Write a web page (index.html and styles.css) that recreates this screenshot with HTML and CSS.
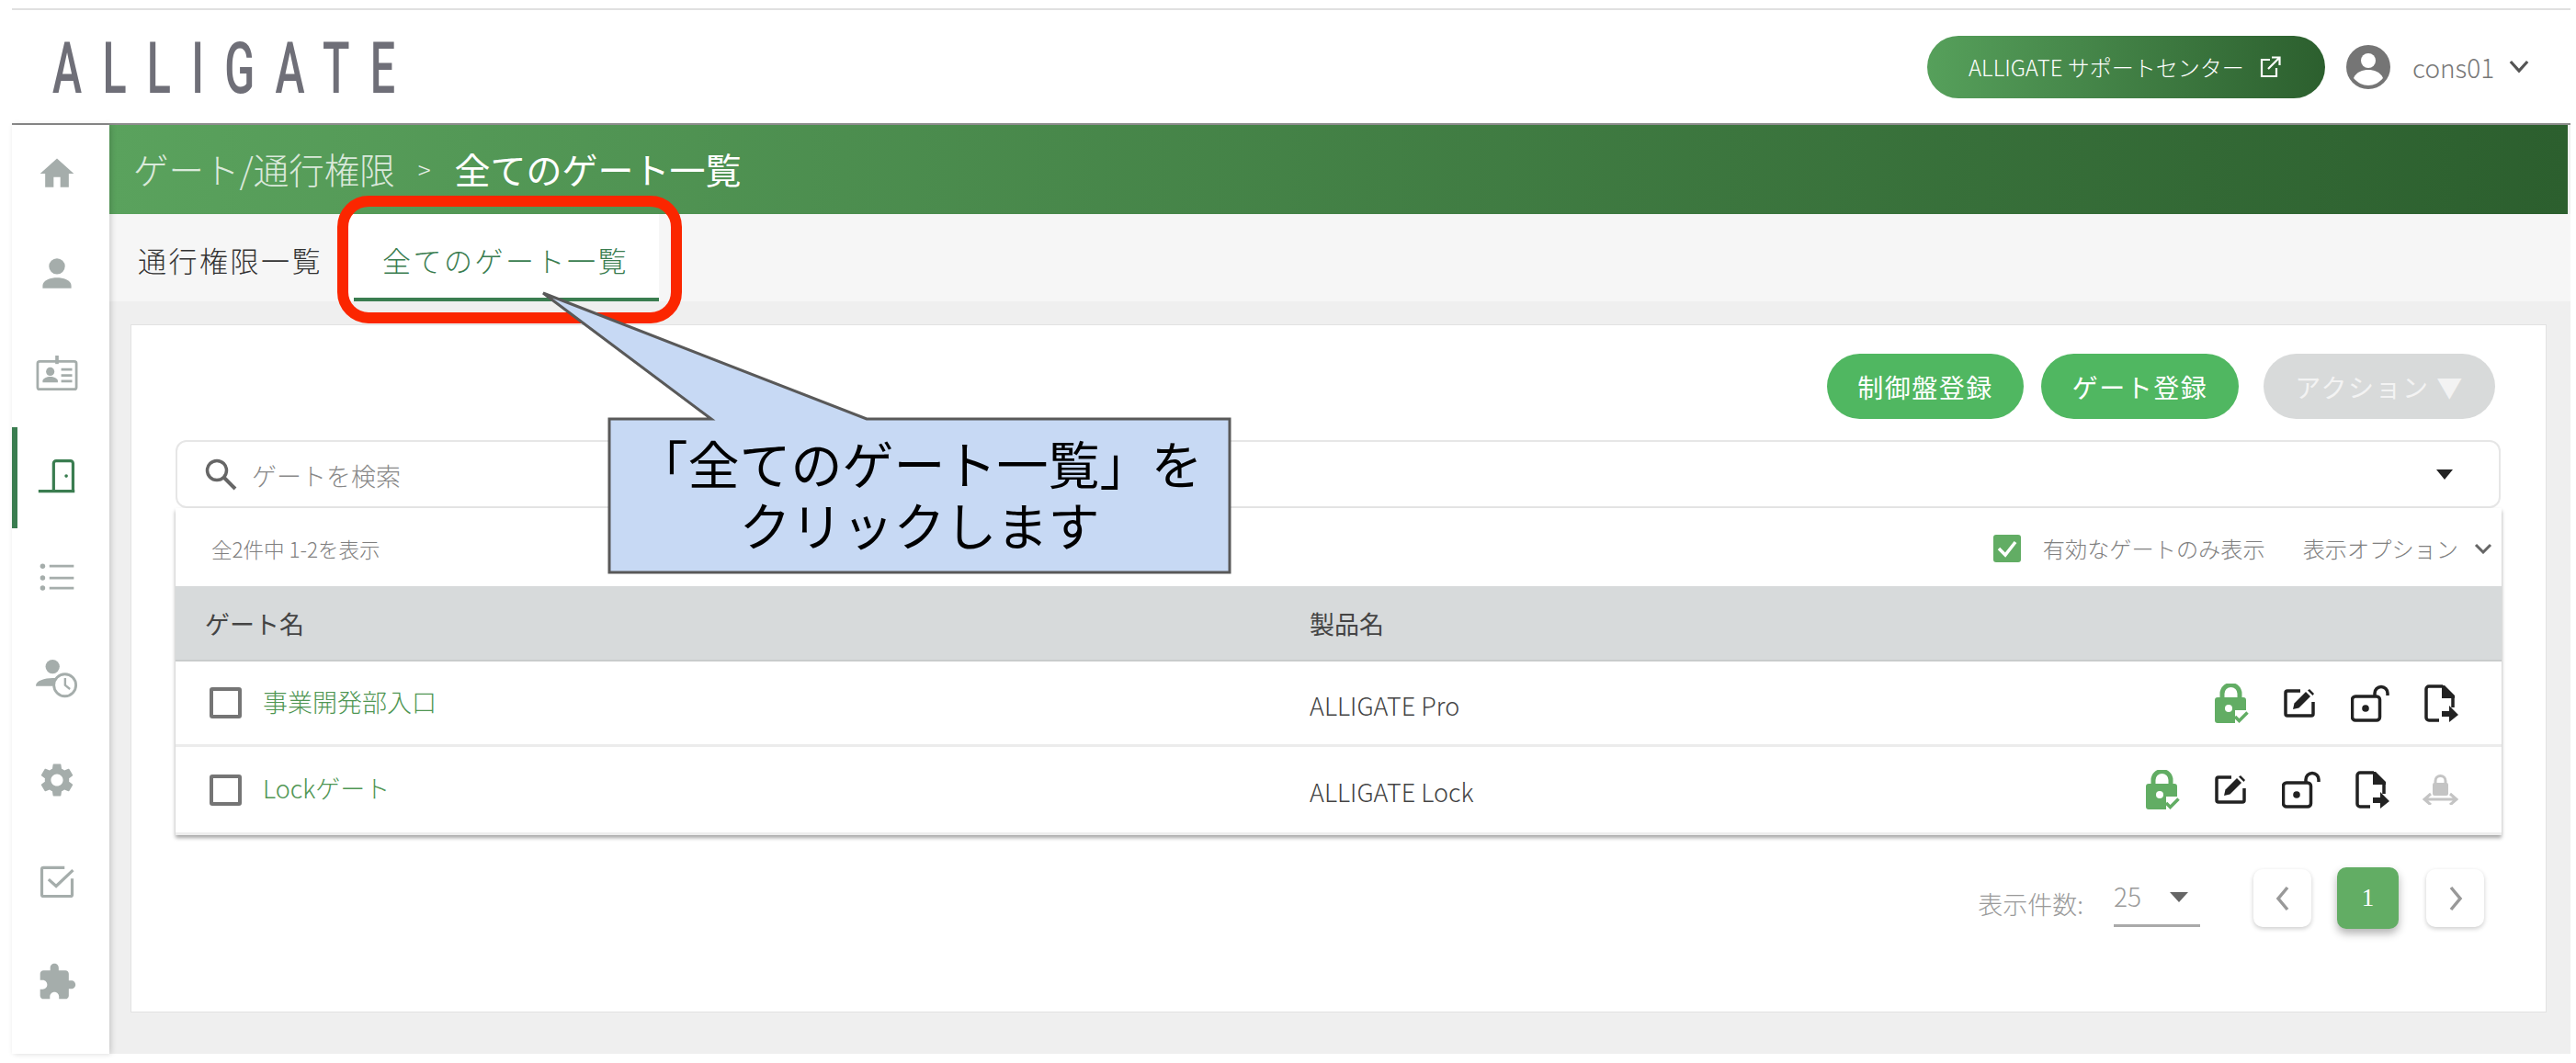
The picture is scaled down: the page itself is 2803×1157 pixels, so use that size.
FILE: index.html
```html
<!DOCTYPE html>
<html lang="ja">
<head>
<meta charset="utf-8">
<title>全てのゲート一覧</title>
<link rel="stylesheet" href="styles.css">
</head>
<body>
<svg class="defs" aria-hidden="true">
  <symbol id="i-lock" viewBox="0 0 38 43">
    <path d="M8 18V11a9.500 9.500 0 0 1 19 0v7" fill="none" stroke="#62ad64" stroke-width="5"/>
    <path d="M3 15h28a3 3 0 0 1 3 3v11h-12v14H3a3 3 0 0 1-3-3V18a3 3 0 0 1 3-3z" fill="#62ad64"/>
    <circle cx="15" cy="27" r="4" fill="#fff"/>
    <path d="M22 36l4.500 4.500 9-9" fill="none" stroke="#62ad64" stroke-width="3.500"/>
  </symbol>
  <symbol id="i-edit" viewBox="0 0 36 33">
    <path d="M19 3H5a2 2 0 0 0-2 2v23a2 2 0 0 0 2 2h26a2 2 0 0 0 2-2V15" fill="none" stroke="#222" stroke-width="3.500"/>
    <path d="M11 23l1.500-6.500L25 4l5 5-12.500 12.500z" fill="#222"/>
    <path d="M27 2.500l2-1.500 5 5-1.500 2z" fill="#222"/>
  </symbol>
  <symbol id="i-unlock" viewBox="0 0 42 41">
    <rect x="1.500" y="13" width="30" height="26" rx="3.500" fill="none" stroke="#222" stroke-width="3.500"/>
    <circle cx="16" cy="26" r="3.800" fill="#222"/>
    <path d="M26 13V9.500a7 7 0 0 1 14 0V12" fill="none" stroke="#222" stroke-width="3.500"/>
  </symbol>
  <symbol id="i-doc" viewBox="0 0 37 41">
    <path d="M20 2H5a3 3 0 0 0-3 3v31a3 3 0 0 0 3 3h11M31 14v11" fill="none" stroke="#222" stroke-width="3.500"/>
    <path d="M19 1h3l11 11v3H19z" fill="#222"/>
    <path d="M19 29h8v-6l10 10-10 8v-6h-8z" fill="#222"/>
  </symbol>
  <symbol id="i-gate" viewBox="0 0 39 33">
    <path d="M14 10V7a5.500 5.500 0 0 1 11 0v3" fill="none" stroke="#c4c4c4" stroke-width="3"/>
    <rect x="11" y="9" width="17" height="14" rx="2" fill="#c4c4c4"/>
    <path d="M3 27h33M9 21l-7 6 7 6M30 21l7 6-7 6" fill="none" stroke="#c4c4c4" stroke-width="3"/>
  </symbol>
</svg>

<div class="page">
  <header class="topbar">
    <div class="logo"><span class="logo-text">ALLIGATE</span></div>
    <div class="top-right">
      <a class="support"><span>ALLIGATE サポートセンター</span><svg class="ext" viewBox="0 0 24 24"><path d="M12 4H3v18h16v-9M10 14L22 2M14 1.500h8.500V10" fill="none" stroke="#fff" stroke-width="2.200"/></svg></a>
      <svg class="avatar" viewBox="0 0 48 48"><circle cx="24" cy="24" r="24" fill="#757575"/><circle cx="24" cy="17" r="8" fill="#fff"/><path d="M8 36c3-7 10-9 16-9s13 2 16 9c-4 5-10 8-16 8s-12-3-16-8z" fill="#fff"/></svg>
      <span class="user">cons01</span>
      <svg class="chev" viewBox="0 0 24 16"><path d="M2 2l10 11L22 2" fill="none" stroke="#555" stroke-width="3.500"/></svg>
    </div>
  </header>

  <div class="body-row">
    <nav class="side">
      <svg class="nav-icon" viewBox="0 0 24 24"><path d="M10 20v-6h4v6h5v-8h3L12 3 2 12h3v8z"/></svg>
      <svg class="nav-icon" viewBox="0 0 48 48"><circle cx="24" cy="14" r="9.500"/><path d="M7 40v-3c0-7 10-9.500 17-9.500S41 30 41 37v3z"/></svg>
      <svg class="nav-icon" viewBox="0 0 48 48"><g fill="none" stroke-width="3"><rect x="1" y="7" width="46" height="33" rx="2.500"/></g><path d="M22 0h4v10h-4z"/><circle cx="16" cy="19" r="5"/><path d="M7 32v-2c0-3 5-5 9-5s9 2 9 5v2z"/><path d="M29 15h13v3H29zM29 22h13v3H29zM29 29h13v3H29z"/></svg>
      <span class="nav-active"><svg class="nav-icon door" viewBox="0 0 48 48"><path d="M20 41V8a3 3 0 0 1 3-3h17a3 3 0 0 1 3 3v33M2 41h43" fill="none" stroke-width="3.500"/><circle cx="35" cy="23" r="2"/></svg></span>
      <svg class="nav-icon" viewBox="0 0 48 48"><circle cx="7" cy="10" r="3"/><circle cx="7" cy="24" r="3"/><circle cx="7" cy="36" r="3"/><path d="M15 8.500h29v3H15zM15 22.500h29v3H15zM15 34.500h29v3H15z"/></svg>
      <svg class="nav-icon clock" viewBox="0 0 48 44"><circle cx="19" cy="8" r="8"/><path d="M0 30c0-6 10-9 19-9 3 0 6 .5 8 1-4 2-7 5-7.500 8z"/><circle cx="33" cy="29" r="12.500" fill="#fff" stroke="#a5adab" stroke-width="3"/><path d="M32 21h2.500v7.500l5 4-1.500 2-6-5z"/></svg>
      <svg class="nav-icon" viewBox="0 0 24 24"><path d="M19.140 12.940c.04-.3.06-.61.06-.94 0-.32-.02-.64-.07-.94l2.030-1.580a.49.49 0 0 0 .12-.61l-1.920-3.320a.488.488 0 0 0-.59-.22l-2.390.96c-.5-.38-1.030-.7-1.620-.94l-.36-2.540a.484.484 0 0 0-.48-.41h-3.840c-.24 0-.43.17-.47.41l-.36 2.540c-.59.24-1.130.57-1.620.94l-2.390-.96c-.22-.08-.47 0-.59.22L2.740 8.870c-.12.21-.08.47.12.61l2.030 1.580c-.05.3-.09.63-.09.94s.02.64.07.94l-2.030 1.580a.49.49 0 0 0-.12.61l1.920 3.320c.12.22.37.29.59.22l2.390-.96c.5.38 1.030.7 1.620.94l.36 2.540c.05.24.24.41.48.41h3.840c.24 0 .44-.17.47-.41l.36-2.540c.59-.24 1.130-.56 1.620-.94l2.390.96c.22.08.47 0 .59-.22l1.920-3.320c.12-.22.07-.47-.12-.61l-2.010-1.580zM12 15.600c-1.980 0-3.600-1.620-3.600-3.600s1.620-3.600 3.600-3.600 3.600 1.620 3.600 3.600-1.620 3.600-3.600 3.600z"/></svg>
      <svg class="nav-icon" viewBox="0 0 48 48"><path d="M33 8H8a2 2 0 0 0-2 2v30a2 2 0 0 0 2 2h32a2 2 0 0 0 2-2V21" fill="none" stroke-width="3.500"/><path d="M14 22l9 8L43 11" fill="none" stroke-width="3.500"/></svg>
      <svg class="nav-icon" viewBox="0 0 24 24"><path d="M20.500 11H19V7c0-1.100-.9-2-2-2h-4V3.500C13 2.120 11.880 1 10.500 1S8 2.120 8 3.500V5H4c-1.100 0-1.990.9-1.990 2v3.800H3.500c1.490 0 2.700 1.210 2.700 2.700s-1.210 2.700-2.700 2.700H2V20c0 1.100.9 2 2 2h3.800v-1.500c0-1.490 1.210-2.700 2.700-2.700 1.490 0 2.700 1.210 2.700 2.700V22H17c1.100 0 2-.9 2-2v-4h1.500c1.380 0 2.500-1.120 2.500-2.500S21.880 11 20.500 11z"/></svg>
    </nav>

    <main class="content">
      <div class="crumbs">
        <span class="crumb-parent">ゲート/通行権限</span>
        <span class="crumb-sep">&gt;</span>
        <span class="crumb-current">全てのゲート一覧</span>
      </div>
      <div class="tabs">
        <div class="tab tab-first">通行権限一覧</div>
        <div class="tab tab-on">全てのゲート一覧</div>
      </div>
      <div class="work">
        <section class="card">
          <div class="actions">
            <button class="pill pill-a">制御盤登録</button>
            <button class="pill pill-b">ゲート登録</button>
            <button class="pill pill-off">アクション ▼</button>
          </div>
          <div class="search">
            <svg class="search-icon" viewBox="0 0 36 36"><circle cx="14" cy="14" r="10.500" fill="none" stroke="#666" stroke-width="3.500"/><path d="M22 22l12 12" stroke="#666" stroke-width="4"/></svg>
            <span class="search-text">ゲートを検索</span>
            <span class="search-arrow"></span>
          </div>
          <div class="table">
            <div class="tools">
              <span class="count">全2件中 1-2を表示</span>
              <span class="tools-right">
                <svg class="only-check" viewBox="0 0 30 30"><rect width="30" height="30" rx="3" fill="#62ad64"/><path d="M6 15l7 7L24 8" fill="none" stroke="#fff" stroke-width="3.500"/></svg>
                <span class="tool-label">有効なゲートのみ表示</span>
                <span class="tool-label opt">表示オプション</span>
                <svg class="opt-chev" viewBox="0 0 20 12"><path d="M2 2l8 8 8-8" fill="none" stroke="#666" stroke-width="3"/></svg>
              </span>
            </div>
            <div class="row head">
              <span class="cell-name head-name">ゲート名</span>
              <span class="cell-prod">製品名</span>
            </div>
            <div class="row item">
              <span class="cell-name"><span class="box"></span><a class="gate-link">事業開発部入口</a></span>
              <span class="cell-prod">ALLIGATE Pro</span>
              <span class="cell-icons">
                <svg class="ic ic-lock"><use href="#i-lock"/></svg>
                <svg class="ic ic-edit"><use href="#i-edit"/></svg>
                <svg class="ic ic-unlock"><use href="#i-unlock"/></svg>
                <svg class="ic ic-doc"><use href="#i-doc"/></svg>
              </span>
            </div>
            <div class="row item last">
              <span class="cell-name"><span class="box"></span><a class="gate-link">Lockゲート</a></span>
              <span class="cell-prod">ALLIGATE Lock</span>
              <span class="cell-icons">
                <svg class="ic ic-lock"><use href="#i-lock"/></svg>
                <svg class="ic ic-edit"><use href="#i-edit"/></svg>
                <svg class="ic ic-unlock"><use href="#i-unlock"/></svg>
                <svg class="ic ic-doc"><use href="#i-doc"/></svg>
                <svg class="ic ic-gate"><use href="#i-gate"/></svg>
              </span>
            </div>
          </div>
          <div class="pager">
            <span class="pp-label">表示件数:</span>
            <span class="pp-select"><span>25</span><i class="pp-arrow"></i></span>
            <span class="pg"><svg viewBox="0 0 20 32" class="pg-icon"><path d="M15 4L5 16l10 12" fill="none" stroke="#999" stroke-width="3.500"/></svg></span>
            <span class="pg pg-on">1</span>
            <span class="pg"><svg viewBox="0 0 20 32" class="pg-icon"><path d="M5 4l10 12L5 28" fill="none" stroke="#999" stroke-width="3.500"/></svg></span>
          </div>
        </section>
      </div>
    </main>
  </div>
</div>

<svg class="overlay" viewBox="0 0 2803 1157" aria-hidden="true">
  <rect x="373" y="219" width="363" height="127" rx="28" fill="none" stroke="#fb2600" stroke-width="12"/>
  <path d="M663 456H774L591 319L943 456H1338V623H663Z" fill="#c7d9f4" stroke="#595959" stroke-width="3"/>
</svg>
<div class="callout">「全てのゲート一覧」を<br>クリックします</div>
</body>
</html>
```

FILE: styles.css
```css
* { box-sizing: border-box; }
html, body { margin: 0; padding: 0; }
body {
  position: relative;
  width: 2803px;
  height: 1157px;
  overflow: hidden;
  background: #fff;
  font-family: "Noto Sans CJK JP", "Noto Sans", sans-serif;
  font-weight: 300;
  color: #333;
}
.defs { position: absolute; width: 0; height: 0; }
.page {
  margin: 9px 0 0 13px;
  width: 2784px;
  height: 1138px;
  display: flex;
  flex-direction: column;
  border-top: 2px solid #e0e0e0;
  background: #efefef;
}

/* top bar */
.topbar {
  height: 125px;
  flex: none;
  background: #fff;
  display: flex;
  align-items: center;
  justify-content: space-between;
  padding: 0 45px 0 44px;
  border-bottom: 2px solid #8d8d8d;
}
.logo { width: 380px; height: 60px; display: flex; align-items: center; margin-top: 5px; }
.logo-text {
  display: inline-block;
  font-family: "Roboto", sans-serif;
  font-weight: 500;
  font-size: 78px;
  line-height: 60px;
  letter-spacing: 36px;
  color: #6f6f78;
  transform: scaleX(.62);
  transform-origin: left center;
}
.top-right { display: flex; align-items: center; }
.support {
  width: 433px;
  height: 68px;
  border-radius: 34px;
  padding-left: 45px;
  display: flex;
  align-items: center;
  color: #fff;
  font-size: 24px;
  background: linear-gradient(90deg, #56a05b, #2c5f2e);
}
.ext { width: 24px; height: 24px; margin-left: 16px; }
.avatar { width: 48px; height: 48px; margin-left: 23px; }
.user { font-size: 28px; color: #777; margin-left: 24px; width: 105px; }
.chev { width: 22px; height: 15px; }

/* body */
.body-row { flex: 1; display: flex; min-height: 0; }
.side {
  width: 106px;
  flex: none;
  background: #fff;
  padding: 31px 8px 0 0;
  display: flex;
  flex-direction: column;
  align-items: center;
  gap: 66px;
  box-shadow: 2px 0 6px rgba(0,0,0,.16);
  position: relative;
  z-index: 2;
}
.nav-icon { width: 46px; height: 44px; fill: #a5adab; stroke: #a5adab; stroke-width: 0; display: block; }
.nav-icon g, .nav-icon [fill="none"] { stroke: #a5adab; }
.nav-active { height: 44px; display: block; }
.nav-active::before {
  content: "";
  position: absolute;
  left: 0;
  top: 329px;
  width: 6px;
  height: 110px;
  background: #3a7d50;
}
.door { fill: #3a7d50; stroke-width: 0; }
.door [fill="none"] { stroke: #3a7d50; }

.content { flex: 1; display: flex; flex-direction: column; min-width: 0; }
.crumbs {
  height: 97px;
  flex: none;
  display: flex;
  align-items: center;
  margin-right: 3px;
  padding-left: 26px;
  padding-bottom: 3px;
  color: #fff;
  background: linear-gradient(90deg, #5aa25d, #2c5f2e);
  font-size: 39px;
}
.crumb-parent { opacity: .78; font-size: 38.500px; }
.crumb-sep { opacity: .85; font-size: 26px; margin: 0 26px 0 25px; }
.crumb-current { font-weight: 400; }

.tabs {
  height: 95px;
  flex: none;
  display: flex;
  background: #f6f6f6;
  font-size: 31px;
  letter-spacing: 2.500px;
}
.tab { display: flex; align-items: center; padding-top: 4px; }
.tab-first { width: 260px; padding-left: 31px; color: #333; }
.tab-on {
  position: relative;
  width: 338px;
  padding-left: 37px;
  background: #fff;
  color: #3a7d50;
}
.tab-on::after {
  content: "";
  position: absolute;
  left: 6px;
  right: 0;
  bottom: 0;
  height: 4px;
  background: #3a7d50;
}

.work { flex: 1; padding: 25px 26px 45px 23px; min-height: 0; }
.card {
  height: 749px;
  background: #fff;
  border: 1px solid #e2e2e2;
  padding: 31px 48px 0 48px;
}
.actions { display: flex; justify-content: flex-end; gap: 19px; padding-right: 7px; }
.pill {
  height: 71px;
  border: 0;
  border-radius: 36px;
  color: #fff;
  font-family: inherit;
  font-weight: 400;
  font-size: 28px;
  letter-spacing: 1.500px;
  padding: 0;
  background: #50b761;
}
.pill-a { width: 214px; }
.pill-b { width: 215px; margin-right: 8px; }
.pill-off { width: 252px; background: #d8dada; color: #f3f3f3; }

.search {
  height: 74px;
  margin: 23px 1px 0 0;
  border: 2px solid #e6e6e6;
  border-radius: 12px;
  display: flex;
  align-items: center;
  padding: 0 50px 0 29px;
}
.search-icon { width: 36px; height: 36px; }
.search-text { font-size: 27px; color: #888; margin-left: 16px; flex: 1; padding-top: 3px; }
.search-arrow {
  width: 0; height: 0;
  border-left: 9px solid transparent;
  border-right: 9px solid transparent;
  border-top: 11px solid #222;
}

.table {
  box-shadow: 0 3px 4px rgba(0,0,0,.35);
  border-bottom: 3px solid #eee;
}
.tools {
  height: 85px;
  display: flex;
  align-items: center;
  justify-content: space-between;
  padding: 2px 10px 0 39px;
  color: #808080;
}
.count { font-size: 22.500px; }
.tools-right { display: flex; align-items: center; }
.only-check { width: 30px; height: 30px; }
.tool-label { font-size: 24.200px; margin-left: 24px; }
.opt { margin-left: 41px; }
.opt-chev { width: 20px; height: 12px; margin-left: 17px; }

.row { display: grid; grid-template-columns: 1234px 400px 1fr; align-items: center; }
.head {
  height: 82px;
  background: #d7dadb;
  border-bottom: 2px solid #c9cccc;
  font-size: 27px;
  font-weight: 400;
  color: #444;
}
.item { height: 93px; border-bottom: 3px solid #ececec; font-size: 27px; }
.last { height: 93px; border-bottom: 0; }
.cell-name { display: flex; align-items: center; padding-left: 37px; }
.head-name.cell-name { padding-left: 32px; }
.box {
  width: 35px;
  height: 34px;
  border: 4px solid #757575;
  border-radius: 3px;
  margin-right: 23px;
  flex: none;
}
.gate-link { color: #4f9653; margin-top: -4px; }
.cell-prod { color: #444; white-space: nowrap; }
.item .cell-prod { margin-top: 4px; }
.cell-icons { display: flex; justify-content: flex-end; align-items: center; gap: 38px; padding-right: 47px; margin-left: -300px; white-space: nowrap; }
.ic { display: block; flex: none; }
.ic-lock { width: 38px; height: 43px; margin-right: -2px; }
.ic-edit { width: 36px; height: 33px; }
.ic-unlock { width: 42px; height: 41px; }
.ic-doc { width: 37px; height: 41px; }
.ic-gate { width: 39px; height: 33px; margin-left: -2px; }

.pager {
  display: flex;
  align-items: center;
  justify-content: flex-end;
  margin-top: 35px;
  padding-right: 19px;
}
.pp-label { font-size: 27px; color: #999; margin-right: 33px; margin-top: 12px; }
.pp-select {
  width: 94px;
  height: 62px;
  border-bottom: 3px solid #aaa;
  display: flex;
  align-items: flex-start;
  justify-content: space-between;
  padding-right: 13px;
  font-size: 28px;
  color: #999;
  margin-right: 58px;
}
.pp-select span { line-height: 56px; }
.pp-arrow {
  width: 0; height: 0;
  margin-top: 24px;
  border-left: 10px solid transparent;
  border-right: 10px solid transparent;
  border-top: 11px solid #666;
}
.pg {
  width: 63px;
  height: 63px;
  border-radius: 10px;
  background: #fff;
  box-shadow: 0 2px 5px rgba(0,0,0,.2);
  display: flex;
  align-items: center;
  justify-content: center;
}
.pg-icon { width: 20px; height: 32px; }
.pg-on {
  width: 67px;
  height: 67px;
  margin: 0 30px 0 28px;
  background: #62ad64;
  color: #fff;
  font-family: "Liberation Serif", serif;
  font-size: 27px;
  font-weight: 400;
  box-shadow: 0 5px 10px rgba(0,0,0,.3);
}

/* annotation layer */
.overlay {
  position: absolute;
  left: 0;
  top: 0;
  width: 2803px;
  height: 1157px;
  z-index: 5;
}
.callout {
  position: absolute;
  left: 663px;
  top: 469px;
  width: 675px;
  z-index: 6;
  text-align: center;
  font-size: 56px;
  line-height: 67px;
  font-weight: 400;
  color: #000;
}
```
